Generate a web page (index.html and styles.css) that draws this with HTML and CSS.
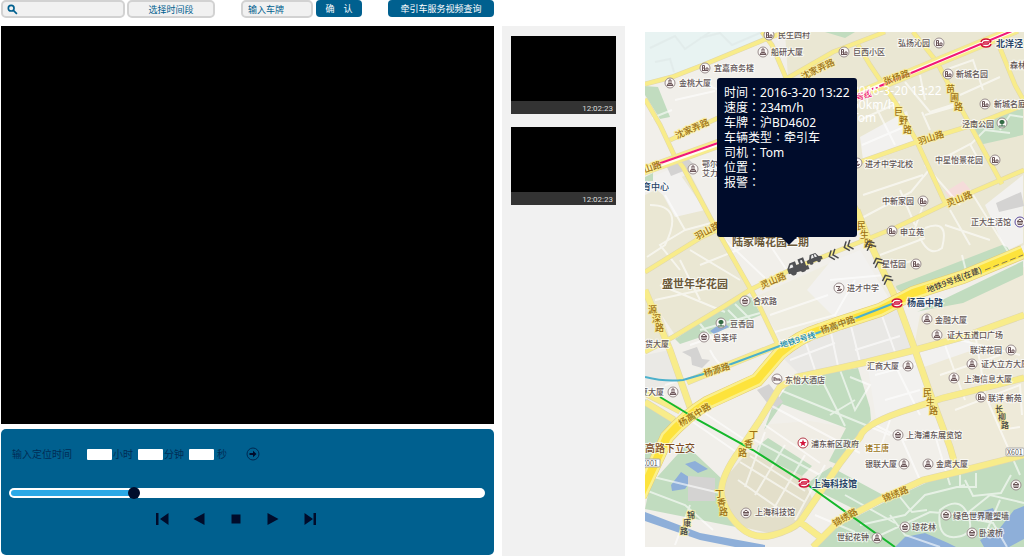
FILE: index.html
```html
<!DOCTYPE html>
<html lang="zh-CN">
<head>
<meta charset="utf-8">
<title>牵引车服务视频查询</title>
<link rel="stylesheet" href="styles.css">
</head>
<body>
<main class="page">
  <section class="player">
    <form class="toolbar">
      <label class="search">
        <svg class="search-icon" viewBox="0 0 10 10" aria-hidden="true"><circle cx="3.8" cy="3.8" r="2.6"/><path d="M6 6l3 3"/></svg>
        <input type="search" aria-label="搜索">
      </label>
      <button type="button" class="field period">选择时间段</button>
      <input class="field plate" type="text" placeholder="输入车牌" aria-label="输入车牌">
      <button type="button" class="action confirm">确&emsp;认</button>
      <button type="button" class="action query">牵引车服务视频查询</button>
    </form>
    <div class="screen"></div>
    <div class="controls">
      <div class="locate">
        <span class="locate-title">输入定位时间</span>
        <input id="hours" type="text"><label for="hours">小时</label>
        <input id="minutes" type="text"><label for="minutes">分钟</label>
        <input id="seconds" type="text"><label for="seconds" class="last">秒</label>
        <button type="button" class="go" aria-label="定位">
          <svg viewBox="0 0 14 14"><circle cx="7" cy="7" r="6" fill="none" stroke="#002850"/><path d="M3.500 6h3.500V3.800L10.500 7 7 10.200V8H3.500z" fill="#000c2b"/></svg>
        </button>
      </div>
      <input class="progress" type="range" min="0" max="1000" value="254" aria-label="播放进度">
      <div class="buttons">
        <button type="button" aria-label="上一段"><svg viewBox="0 0 14 14"><path d="M1 1h2.500v12H1zM13.500 1v12L5 7z"/></svg></button>
        <button type="button" aria-label="后退"><svg viewBox="0 0 14 14"><path d="M12.500 1v12L1.500 7z"/></svg></button>
        <button type="button" aria-label="停止"><svg viewBox="0 0 14 14"><path d="M2.500 2.500h9v9h-9z"/></svg></button>
        <button type="button" aria-label="播放"><svg viewBox="0 0 14 14"><path d="M1.500 1v12l11-6z"/></svg></button>
        <button type="button" aria-label="下一段"><svg viewBox="0 0 14 14"><path d="M10.500 1H13v12h-2.500zM1.500 1v12L10 7z"/></svg></button>
      </div>
    </div>
  </section>

  <aside class="clips">
    <div class="clip"><time>12:02:23</time></div>
    <div class="clip"><time>12:02:23</time></div>
  </aside>

  <section class="map">
    <svg class="map-art" viewBox="645 32 379 515" role="img" aria-label="地图">
      <defs>
        <symbol id="home" viewBox="-6 -6 12 12"><circle class="poi" r="5"/><path class="glyph" d="M-2.500 2.500v-5h2v5M-2.500 0h2M1 2.500V0h2v2.500M-3 2.500h6"/></symbol>
        <symbol id="tower" viewBox="-6 -6 12 12"><circle class="poi" r="5"/><path class="glyph" d="M-3 2.500L-1-.5V-3h2v2.500l2 3zM-1 2.500v-2h2v2"/></symbol>
        <symbol id="hall" viewBox="-6 -6 12 12"><circle class="poi" r="5"/><path class="glyph" d="M-3-.5L0-3l3 2.500zM-2-.5v3h4v-3M0 0v2.500"/></symbol>
        <symbol id="tree" viewBox="-6 -6 12 12"><circle class="poi" r="5"/><path d="M0-3a2 2 0 0 1 1 4h-.5v1.500H3v1h-6v-1h2.500V1H-1a2 2 0 0 1 1-4z" fill="#356b45"/></symbol>
        <symbol id="school" viewBox="-6 -6 12 12"><circle class="poi" r="5"/><path class="glyph" d="M-3-1.500h4L-1 1l4 .5M-2 2.500h4"/></symbol>
        <symbol id="hotel" viewBox="-6 -6 12 12"><circle class="poi" r="5"/><path class="glyph" d="M-3-2v4M-3 1h6M3 2v-2h-4v-1h-2"/></symbol>
        <symbol id="metro" viewBox="-6 -6 12 12"><ellipse rx="5" ry="4" fill="#fff"/><path d="M5-1C4-5-4-5-5-1 M-5 1C-4 5 4 5 5 1M5-1H-1.500a1 1 0 0 0-1 1M-5 1H1.500a1 1 0 0 0 1-1" fill="none" stroke="#d2123a" stroke-width="1.500"/></symbol>
        <path id="chev" d="M0-5l-4 5 4 5M4-5L0 0l4 5"/>
      </defs>
      <rect x="645" y="32" width="379" height="515" fill="#f1efea"/>

      <g fill="#eae7d3">
        <path d="M785 32H1024V245L897 292 857 210V160L788 78z"/>
        <path d="M645 195l45-22 60 117-75 45-30-45z"/>
        <path d="M755 297l100-45 38 45-50 24-60 22z" fill="#efede1"/>
        <path d="M920 315l104-48v280l-70-80-40-120z" fill="#eeead9"/>
        <path d="M760 425l50-4 55 10-60 88-35 14-33-12-14-25 8-36z" fill="#f0ede5"/>
        <path d="M748 452l54 24 12 27-14 19-27 12-35-8-16-29 4-20z" fill="#e3dfca"/>
        <path d="M645 285l8 5 17 48-25 12z"/>
        <path d="M645 355l25-5 14 30-39 10z" fill="#eae9e5"/>
        <path d="M780 355l65-32 52-18 18 45-115 25z" fill="#e9e8e5"/>
      </g>
      <path d="M645 32h128l-5 7-65 26-58 21z" fill="#e8f3f2"/>
      <path d="M645 180l30-13 30 43-30 7-12-22zM860 137l47-26 8 31-52 18zM830 262l30-12 30 50-55 18-28-28zM867 362l47-11 20 44-58 23z" fill="#f2f1ef"/>
      <path d="M918 353l50-14 8 10-52 18zM985 205l38-30v68l-17 8z" fill="#f2f1ef"/>
      <g fill="#c1dcbf">
        <path d="M645 86l13 1 12 30-10 2-15-24zM645 177l8-4v8h-8zM973 128l50-21v28l-44 10z"/>
        <path d="M896 286l106-41q10 2 6 11l-104 36q-8-1-8-6zM917 312l106-51v14l-60 28-43 8z"/>
        <path d="M675 339l69-45 8 4 9 17-27 11-54 18z"/>
        <path d="M645 399l31 19-13 26-18 27zM650 485l36-40 37 35-1 24 14 23-91-18z"/>
        <path d="M787 386l40-13 31-5 12 40 1 12-12 14-20 31-10-4 17-33-64-24-18 26 8-22zM818 475l13-8 52 28-27 15-50-25z"/>
        <path d="M758 446l10-8 44 28-10 10-46-22zM815 547l25-22 45-23 45-21 94-24v90zM825 32h30l-10 6z"/>
      </g>
      <g fill="#8eafd9">
        <path d="M645 512l55 21 65 12v2h-30l-35-7-55-19zM671 485l10-13 11 7-7 10-13 2zM685 464l10-3 13 8-10 4zM710 331l13-9 6 5-15 7z"/>
        <path d="M895 547l10-10 20-4 23 10 8 4zM980 540l20-12 14-18 10-4v33l-15 8h-25zM985 520l-15-5 23-7 4 10z"/>
      </g>
      <path d="M682 352l15-5 5 12 8 1-8 8-10-3-1-8zM688 476l27 2v23h-27zM757 390l12-6 14 18-10 8zM996 203l25-11 3 14-25 6zM666 165l20-8 10 9-25 10z" fill="#d4d3d2"/>
      <path d="M945 192l18-11 11 13-20 9z" fill="#f5dcda"/>

      <g class="lane">
        <path d="M650 48l25-12 10 13 25-17M700 38l20-5 12 12 30-13M655 62l15-3 4 13" stroke="#dfe9e8"/>
        <path d="M652 118l20-8M690 80l30 10M675 100l40-9"/>
        <path d="M650 205q35 0 15 40l-18 12M665 195l20 35 30-8M685 230l-25 15 20 25M690 250l50 30M700 265l45-18M725 240l40 38M770 245l20 30M660 285l65 27M680 260l20 40M655 300l60-13"/>
        <path d="M860 120l40-18M862 145l42-18M875 105l20 40M905 82l25 30 25-8M920 75l5 25M945 70l28-10 10 30M960 95l40-18M925 115l35-10M930 130l-8-18M970 145l15-15 25 3M1000 130l10-15 13 2M940 160l30-16 12 22M925 165l35 40"/>
        <path d="M863 195l60-20M858 220l53-28 18-22M900 190l15 35M925 200l-10 28M880 255l45-17M925 228q25-10 17 20-12 10-22-10M950 210l20 35M970 190l40 65M945 225l45 15M880 270l35-10M830 280l55-5M962 255l5 20"/>
        <path d="M665 385l15-5M690 345l35-12M700 330l60-17M715 342l-18-22M728 310l20 20M735 304l20 20M710 350q15 30 30 8M780 345l30-15 40-4M790 360l45-17M805 340l10 30M830 328l8 38M850 322l10 40M880 310l15 42M855 350l45-14M770 315l58-20M775 332l60-17 20-35"/>
        <path d="M700 410l45 30M690 420l55 38M780 390l110 45M770 405l90 48M820 376l25 50M840 370l15 40 15-25-20-8M855 400l-25 15M875 375l45-12M885 400l35-10M895 365l25 50M945 345l20 55M960 340l60 15M975 333l10 60M940 375l60-20M955 410l65-25 2 30M985 395l35 80M1000 430l20-3"/>
        <path d="M755 440l65 35M750 456l55 35M765 432l-20 55M785 445l-30 50M805 455l-35 60M825 465l-30 55M738 480l50 35M740 462l65 40M765 425l55 38"/>
        <path d="M645 490l40 15 28 25M690 505l-15 40M645 475l75 18M875 425l30 15 35-10M900 435l20 45M890 420l-10 30M935 435l15 50M815 515l40 17M845 495l50 28"/>
        <path d="M860 525l45-10 20-20 40-10M870 540l60-28 35 3 25-20 34 8M890 515l15 20 35 12M900 497l12 15 15-2M940 510q20-15 28 5t-12 22-16-27zM968 518l25 5 14 24M965 480l8 16 28-3 10-18M1000 500l-15 35M960 473v14h16v-14"/>
      </g>

      <g class="road casing">
        <path d="M645 84l27-7 31-12 63-26 19-7M762 32l10 13 14 33 71 132 13 33 28 60 17 47 15 43 10 27 10 27 8 26M670 140l48-22 115-66 52-20M645 99l15 26 15 32 8 10 30 56 42 74 23 48M645 272l55-34 157-75 60-21 56-17 51-20M645 352l28-15 50-30 27-17 40-20 50-20 57-23 50-24 77-33M858 45l12 20 27 40 20 37 28 61M913 32l24 30 26 50 27 50 12 22M1000 48l15 37 9 16"/>
        <path class="medium" d="M645 290l25 60 20 57M687 382l46-19 45-18M760 420l20-33 17-10 43-9 27-6 48-12 48-13 61-22M645 393l35 18M645 402l29 18"/>
        <path class="medium" d="M760 420l-20 30q-22 30-18 47t18 30 33 8 27-13l13-19 27-40 20-26q4-14 53-29l30-10 81-20M813 547l24-24 43-23 43-20 34-8 67-17M800 522l20 15M857 210l13 33 28 60 17 47 15 43 10 27 10 27 7 24"/>
      </g>
      <g class="road">
        <path d="M645 84l27-7 31-12 63-26 19-7M762 32l10 13 14 33 71 132 13 33 28 60 17 47 15 43 10 27 10 27 8 26M670 140l48-22 115-66 52-20M645 99l15 26 15 32 8 10 30 56 42 74 23 48M645 272l55-34 157-75 60-21 56-17 51-20M645 352l28-15 50-30 27-17 40-20 50-20 57-23 50-24 77-33M858 45l12 20 27 40 20 37 28 61M913 32l24 30 26 50 27 50 12 22M1000 48l15 37 9 16"/>
        <path class="medium" d="M645 290l25 60 20 57M687 382l46-19 45-18M760 420l20-33 17-10 43-9 27-6 48-12 48-13 61-22M645 393l35 18M645 402l29 18"/>
        <path class="medium" d="M760 420l-20 30q-22 30-18 47t18 30 33 8 27-13l13-19 27-40 20-26q4-14 53-29l30-10 81-20M813 547l24-24 43-23 43-20 34-8 67-17M800 522l20 15M857 210l13 33 28 60 17 47 15 43 10 27 10 27 7 24"/>
      </g>
      <g fill="none">
        <path d="M640 172l78-28 139-49 160-66" stroke="#e3dab0" stroke-width="10"/>
        <path d="M640 172l78-28 139-49 160-66" stroke="#f7ec8c" stroke-width="9"/>
        <path d="M640 172l78-28 139-49 160-66" stroke="#fffdf0" stroke-width="4"/>
        <path d="M655 165l63-22 139-48" stroke="#f01878" stroke-width="2"/>
        <path d="M857 95l23-9" stroke="#f01878" stroke-width="2" stroke-dasharray="2 2"/>
        <path d="M880 86l132-55" stroke="#f01878" stroke-width="2"/>
        <path d="M640 496l4-9 23-50q20-22 40-34l50-23 23-27q20-17 40-23l20-7 40-13 33-17 50-16 60-25" stroke="#e0c976" stroke-width="14"/>
        <path d="M640 496l4-9 23-50q20-22 40-34l50-23 23-27q20-17 40-23l20-7 40-13 33-17 50-16 60-25" stroke="#fbf08a" stroke-width="13"/>
        <path d="M640 496l4-9 23-50q20-22 40-34l50-23 23-27q20-17 40-23l20-7 40-13 33-17 50-16 60-25" stroke="#fde33c" stroke-width="8"/>
        <path d="M645 377q20 5 38 3l24-7 70-26 43-15 77-30" stroke="#4cb0cb" stroke-width="2"/>
        <path d="M985 270l38-15" stroke="#887b50" stroke-dasharray="6 3"/>
        <path d="M660 397l38 23 55 30 52 33 90 64" stroke="#15b82c" stroke-width="2"/>
      </g>

      <g class="street">
        <text transform="translate(677 139) rotate(-24)">沈家弄路</text>
        <text transform="translate(803 80) rotate(-26)">沈家弄路</text>
        <text transform="translate(885 85) rotate(-20)">张杨路</text>
        <text transform="translate(645 173) rotate(-20)">山路</text>
        <text transform="translate(697 240) rotate(-28)">羽山路</text>
        <text transform="translate(919 145) rotate(-18)">羽山路</text>
        <text transform="translate(762 289) rotate(-24)">灵山路</text>
        <text transform="translate(948 207) rotate(-22)">灵山路</text>
        <text transform="translate(705 377) rotate(-18)">杨源路</text>
        <text transform="translate(822 334) rotate(-20)">杨高中路</text>
        <text transform="translate(681 427) rotate(-32)">杨高中路</text>
        <text transform="translate(835 527) rotate(-30)">锦绣路</text>
        <text transform="translate(884 502) rotate(-22)">锦绣路</text>
        <text><tspan x="894" y="115">巨</tspan><tspan x="899" y="124">野</tspan><tspan x="903" y="133">路</tspan></text>
        <text><tspan x="946" y="92">苗</tspan><tspan x="950" y="101">圃</tspan><tspan x="954" y="110">路</tspan></text>
        <text><tspan x="857" y="229">民</tspan><tspan x="860" y="238">生</tspan><tspan x="864" y="247">路</tspan></text>
        <text><tspan x="923" y="396">民</tspan><tspan x="926" y="405">生</tspan><tspan x="929" y="414">路</tspan></text>
        <text><tspan x="648" y="313">源</tspan><tspan x="652" y="322">深</tspan><tspan x="655" y="331">路</tspan></text>
        <text><tspan x="749" y="438">丁</tspan><tspan x="744" y="447">香</tspan><tspan x="738" y="456">路</tspan></text>
        <text><tspan x="715" y="497">丁</tspan><tspan x="717" y="506">香</tspan><tspan x="719" y="515">路</tspan></text>
      </g>
      <g class="street dark">
        <text><tspan x="687" y="518">锦</tspan><tspan x="683" y="526">康</tspan><tspan x="680" y="534">路</tspan></text>
        <text><tspan x="995" y="412">长</tspan><tspan x="998" y="420">柳</tspan><tspan x="1001" y="428">路</tspan></text>
        <text transform="translate(928 293) rotate(-21)">地铁9号线(在建)</text>
      </g>
      <text class="line-name" transform="translate(781 348) rotate(-17)">地铁9号线</text>
      <text class="line-name pink" transform="translate(857 101) rotate(-18)">号线</text>

      <g class="place">
        <text x="778" y="38">民生四村</text><text x="771" y="55">船研大厦</text><text x="714" y="71">宜嘉商务楼</text><text x="679" y="86">金桃大厦</text>
        <text x="898" y="46">弘扬沁园</text><text x="853" y="55">巨西小区</text><text x="956" y="77">新城名园</text><text x="994" y="107">新城名庭</text><text x="1010" y="68">森林</text>
        <text x="962" y="127">泾南公园</text><text x="935" y="163">中星怡景花园</text><text x="865" y="167">进才中学北校</text><text x="882" y="204">中新家园</text><text x="900" y="235">申立苑</text>
        <text x="971" y="225">正大生活馆</text><text x="882" y="267">星恬园</text><text x="847" y="291">进才中学</text><text x="702" y="167">鄂尔</text><text x="702" y="176">艾力</text>
        <text x="753" y="304">合欢路</text><text x="730" y="327">豆香园</text><text x="713" y="341">皂荚坪</text><text x="645" y="347">货大厦</text><text x="785" y="383">东怡大酒店</text><text x="640" y="395">夏大厦</text>
        <text x="935" y="323">金融大厦</text><text x="947" y="338">证大五道口广场</text><text x="970" y="353">联洋花园</text><text x="981" y="367">证大立方大厦</text><text x="964" y="382">上海信息大厦</text><text x="988" y="401">联洋 新苑</text><text x="867" y="369">汇商大厦</text>
        <text x="811" y="447">浦东新区政府</text><text x="906" y="438">上海浦东展览馆</text><text x="865" y="467">银联大厦</text><text x="936" y="467">金鹰大厦</text><text x="755" y="515">上海科技馆</text>
        <text x="837" y="540">世纪花钟</text><text x="912" y="530">琼花林</text><text x="953" y="519">绿色世界雕塑墙</text><text x="979" y="536">卧波桥</text>
        <text x="865" y="451" fill="#9a7418">诸王唐</text>
      </g>
      <g class="station">
        <text x="996" y="47">北洋泾</text><text x="907" y="306">杨高中路</text><text x="812" y="487">上海科技馆</text><text x="642" y="190" class="center">育中心</text>
      </g>
      <g class="estate">
        <text x="732" y="246">陆家嘴花园二期</text><text x="662" y="288">盛世年华花园</text><text x="645" y="452" class="pass">高路下立交</text>
      </g>
      <g class="badge">
        <rect x="641" y="459" width="19" height="8" rx="1"/><text x="642" y="466">X001</text>
        <rect x="1006" y="448" width="18" height="8" rx="1"/><text x="1007" y="455">X601</text>
      </g>

      <g>
        <use href="#home" x="763" y="29" width="12" height="12"/><use href="#tower" x="757" y="46" width="12" height="12"/><use href="#home" x="699" y="62" width="12" height="12"/><use href="#tower" x="664" y="77" width="12" height="12"/>
        <use href="#home" x="933" y="37" width="12" height="12"/><use href="#home" x="838" y="46" width="12" height="12"/><use href="#home" x="942" y="68" width="12" height="12"/><use href="#home" x="979" y="98" width="12" height="12"/>
        <use href="#tree" x="996" y="117" width="12" height="12"/><use href="#home" x="989" y="154" width="12" height="12"/><use href="#school" x="851" y="157" width="12" height="12"/><use href="#home" x="917" y="195" width="12" height="12"/>
        <use href="#home" x="886" y="225" width="12" height="12"/><use class="mall" href="#hall" x="1014" y="216" width="12" height="12"/><use href="#home" x="910" y="258" width="12" height="12"/><use href="#school" x="833" y="282" width="12" height="12"/>
        <use href="#tower" x="687" y="163" width="12" height="12"/><use href="#hall" x="739" y="295" width="12" height="12"/><use href="#tree" x="715" y="317" width="12" height="12"/><use href="#hall" x="698" y="331" width="12" height="12"/>
        <use href="#hotel" x="771" y="373" width="12" height="12"/><use href="#tower" x="667" y="386" width="12" height="12"/><use href="#tower" x="921" y="313" width="12" height="12"/><use href="#tower" x="931" y="329" width="12" height="12"/>
        <use href="#home" x="1005" y="344" width="12" height="12"/><use href="#tower" x="966" y="358" width="12" height="12"/><use href="#tower" x="948" y="372" width="12" height="12"/><use href="#home" x="975" y="391" width="12" height="12"/>
        <use href="#tower" x="902" y="360" width="12" height="12"/><use href="#hall" x="892" y="429" width="12" height="12"/><use href="#tower" x="898" y="458" width="12" height="12"/><use href="#tower" x="922" y="458" width="12" height="12"/>
        <use href="#hall" x="740" y="507" width="12" height="12"/><use href="#tower" x="871" y="532" width="12" height="12"/><use href="#hall" x="899" y="521" width="12" height="12"/><use href="#hall" x="940" y="509" width="12" height="12"/>
        <use href="#hall" x="966" y="527" width="12" height="12"/><use href="#hall" x="1010" y="479" width="12" height="12"/>
        <use href="#metro" x="980" y="37" width="12" height="12"/><use href="#metro" x="891" y="297" width="12" height="12"/><use href="#metro" x="798" y="477" width="12" height="12"/>
        <circle cx="803" cy="443" r="5" fill="#fff" stroke="#b43a48"/><path d="M803 439.500l1 2.500h2.500l-2 1.700.8 2.600-2.300-1.500-2.300 1.500.8-2.600-2-1.700h2.500z" fill="#d2123a"/>
      </g>

      <g fill="none" stroke="#4a4a4c" stroke-width="1.500">
        <use href="#chev" transform="translate(833 255) rotate(-22)"/>
        <use href="#chev" transform="translate(848 246) rotate(-22)"/>
        <use href="#chev" transform="translate(870 245) rotate(65)"/>
        <use href="#chev" transform="translate(878 262) rotate(65)"/>
        <use href="#chev" transform="translate(887 279) rotate(65)"/>
      </g>
      <g transform="translate(797 267) rotate(-20)" fill="#505154">
        <path d="M-10 4v-5l4-5h6v4h3v-5h6v9h2v4z"/><circle cx="-5" cy="4" r="3"/><circle cx="5" cy="4" r="3"/><path d="M-8-1l2.500-3h2v3zM5-5h2v3H5z" fill="#eee"/>
        <g transform="translate(19 -2)"><path d="M-8 3V0l3-1 2-4h6l2 4 3 1v3z"/><circle cx="-4" cy="3" r="2"/><circle cx="4" cy="3" r="2"/><path d="M-3-1l1.500-3H0v3zM1-4h1.500l1 3H1z" fill="#eee"/></g>
      </g>
      <g class="ghost"><text x="852" y="95">2016-3-20 13:22</text><text x="852" y="109">60km/h</text><text x="852" y="122">Tom</text></g>
    </svg>
    <div class="popup">
      <p>时间<span class="colon" lang="zh-TW">：</span>2016-3-20 13:22</p>
      <p>速度<span class="colon" lang="zh-TW">：</span>234m/h</p>
      <p>车牌<span class="colon" lang="zh-TW">：</span>沪BD4602</p>
      <p>车辆类型<span class="colon" lang="zh-TW">：</span>牵引车</p>
      <p>司机<span class="colon" lang="zh-TW">：</span>Tom</p>
      <p>位置<span class="colon" lang="zh-TW">：</span></p>
      <p>报警<span class="colon" lang="zh-TW">：</span></p>
    </div>
  </section>
</main>
</body>
</html>
```
FILE: styles.css
```css
* { box-sizing: border-box; }

body {
  margin: 0;
  background: #fff;
  color: #00608f;
  font-family: "Noto Sans", "Noto Sans CJK SC", sans-serif;
  font-size: 9px;
}

button, input {
  margin: 0;
  padding: 0;
  border: 0;
  font: inherit;
  color: inherit;
}

button { background: none; cursor: pointer; }

.page {
  display: grid;
  grid-template-columns: 493fr 8px 123fr 20px 379fr;
  min-height: 100vh;
  padding-left: 1px;
}

.player {
  grid-column: 1;
  display: flex;
  flex-direction: column;
  min-width: 0;
}

.toolbar {
  display: flex;
  height: 17px;
  margin-bottom: 9px;
}

.search, .field {
  height: 18px;
  border: 2px solid #d2d2d2;
  border-radius: 5px;
  background: #f1f1f1;
}

.search {
  display: flex;
  align-items: center;
  flex: 0 1 124px;
  min-width: 0;
  padding-left: 4px;
  gap: 4px;
}

.search input {
  flex: 1;
  min-width: 0;
  background: none;
  outline: none;
}

.search-icon {
  width: 11px;
  height: 11px;
  fill: none;
  stroke: #00608f;
  stroke-width: 1.5;
}

.period { flex: 0 0 88px; margin-left: 2px; }

.plate {
  flex: 0 0 72px;
  width: 72px;
  margin-left: 26px;
  padding-left: 5px;
}

.plate::placeholder { color: #00608f; opacity: 1; }

.action {
  height: 17px;
  border-radius: 4px;
  background: #00608f;
  color: #fff;
}

.confirm { flex: 0 0 46px; margin-left: 3px; }
.query { flex: 0 0 106px; margin-left: auto; }

.screen {
  flex: 1;
  min-height: 300px;
  background: #000;
}

.controls {
  margin-top: 5px;
  margin-bottom: 1px;
  padding: 18px 9px 29px 8px;
  border-radius: 5px;
  background: #00608f;
  color: #002d55;
}

.locate {
  display: flex;
  align-items: center;
  height: 14px;
  padding-left: 3px;
  font-size: 10px;
  line-height: 14px;
}

.locate-title { width: 75px; white-space: nowrap; }

.locate input {
  width: 25px;
  height: 11px;
  border-radius: 1px;
  background: #fff;
}

.locate label { width: 26px; padding-left: 1px; }
.locate .last { width: 32px; padding-left: 3px; }

.go { width: 14px; height: 14px; }
.go svg { display: block; }

.progress {
  display: block;
  appearance: none;
  width: 100%;
  height: 10px;
  margin-top: 27px;
  border-radius: 5px;
  background: #fff;
}

.progress::-webkit-slider-runnable-track {
  height: 6px;
  margin: 0 2px;
  border-radius: 3px;
  background: linear-gradient(to right, #2aa8e6 26%, transparent 26%);
}

.progress::-webkit-slider-thumb {
  appearance: none;
  width: 12px;
  height: 12px;
  margin-top: -3px;
  border-radius: 50%;
  background: #000c2b;
}

.buttons {
  display: flex;
  justify-content: center;
  gap: 23px;
  margin-top: 14px;
  padding-right: 22px;
}

.buttons button { width: 14px; height: 14px; }
.buttons svg { display: block; fill: #000c2b; }

.clips {
  grid-column: 3;
  display: flex;
  flex-direction: column;
  gap: 13px;
  margin-top: 26px;
  padding: 10px 9px;
  background: #f1f1f1;
}

.clip {
  display: flex;
  flex-direction: column;
  justify-content: flex-end;
  height: 78px;
  background: #000;
}

.clip time {
  height: 13px;
  padding-right: 3px;
  background: #333;
  color: #ddd;
  font: 8px/15px Roboto, sans-serif;
  text-align: right;
}

.map {
  grid-column: 5;
  position: relative;
  align-self: start;
  margin-top: 32px;
}

.map-art {
  display: block;
  width: 100%;
  height: auto;
  color: #9a8e8e;
  font-family: "Noto Sans CJK SC", sans-serif;
}

.poi { fill: #fbf8f6; stroke: currentColor; }
.glyph { fill: none; stroke: #6b5558; }
.mall { color: #5b4c9c; }
.lane { fill: none; stroke: #fff; stroke-width: 2; opacity: 0.6; }
.road { fill: none; stroke: #f8ec8a; stroke-width: 4; }
.road .medium { stroke-width: 6; }
.casing { stroke: #e0d7ae; stroke-width: 5; }
.casing .medium { stroke-width: 7; }

.place, .station, .estate, .street, .line-name {
  font-size: 8px;
  font-weight: 500;
  paint-order: stroke;
  stroke: rgba(255, 255, 255, 0.7);
  stroke-width: 2;
}

.place { fill: #625657; }
.station { font-size: 9px; font-weight: 700; fill: #294468; }
.center { font-weight: 500; }
.estate { font-size: 11px; font-weight: 700; fill: #6a5838; }
.pass { font-size: 10px; font-weight: 500; fill: #7b4a24; }
.street { font-size: 9px; fill: #9b7012; stroke: rgba(255, 240, 150, 0.7); }
.dark { font-size: 8px; fill: #3d3d40; }
.line-name { fill: #168aaa; }
.pink { fill: #f01878; }
.badge { font-size: 7px; fill: #555; }
.badge rect { fill: #fff; stroke: #aaa; }

.ghost {
  font-family: "Noto Sans", sans-serif;
  font-size: 12px;
  fill: #fff;
}

.popup {
  position: absolute;
  top: 46px;
  left: 72px;
  width: 140px;
  height: 159px;
  padding: 7px 0 0 7px;
  border-radius: 3px;
  background: #000c2b;
  color: #fff;
  font-size: 12px;
  line-height: 15px;
  white-space: nowrap;
}

.popup p { margin: 0; }

.colon {
  font-family: "Noto Sans CJK TC", sans-serif;
  line-height: 1;
}

.popup::after {
  content: "";
  position: absolute;
  top: 100%;
  left: 64px;
  border: 8px solid transparent;
  border-top-color: #000c2b;
  border-bottom: 0;
}
```
